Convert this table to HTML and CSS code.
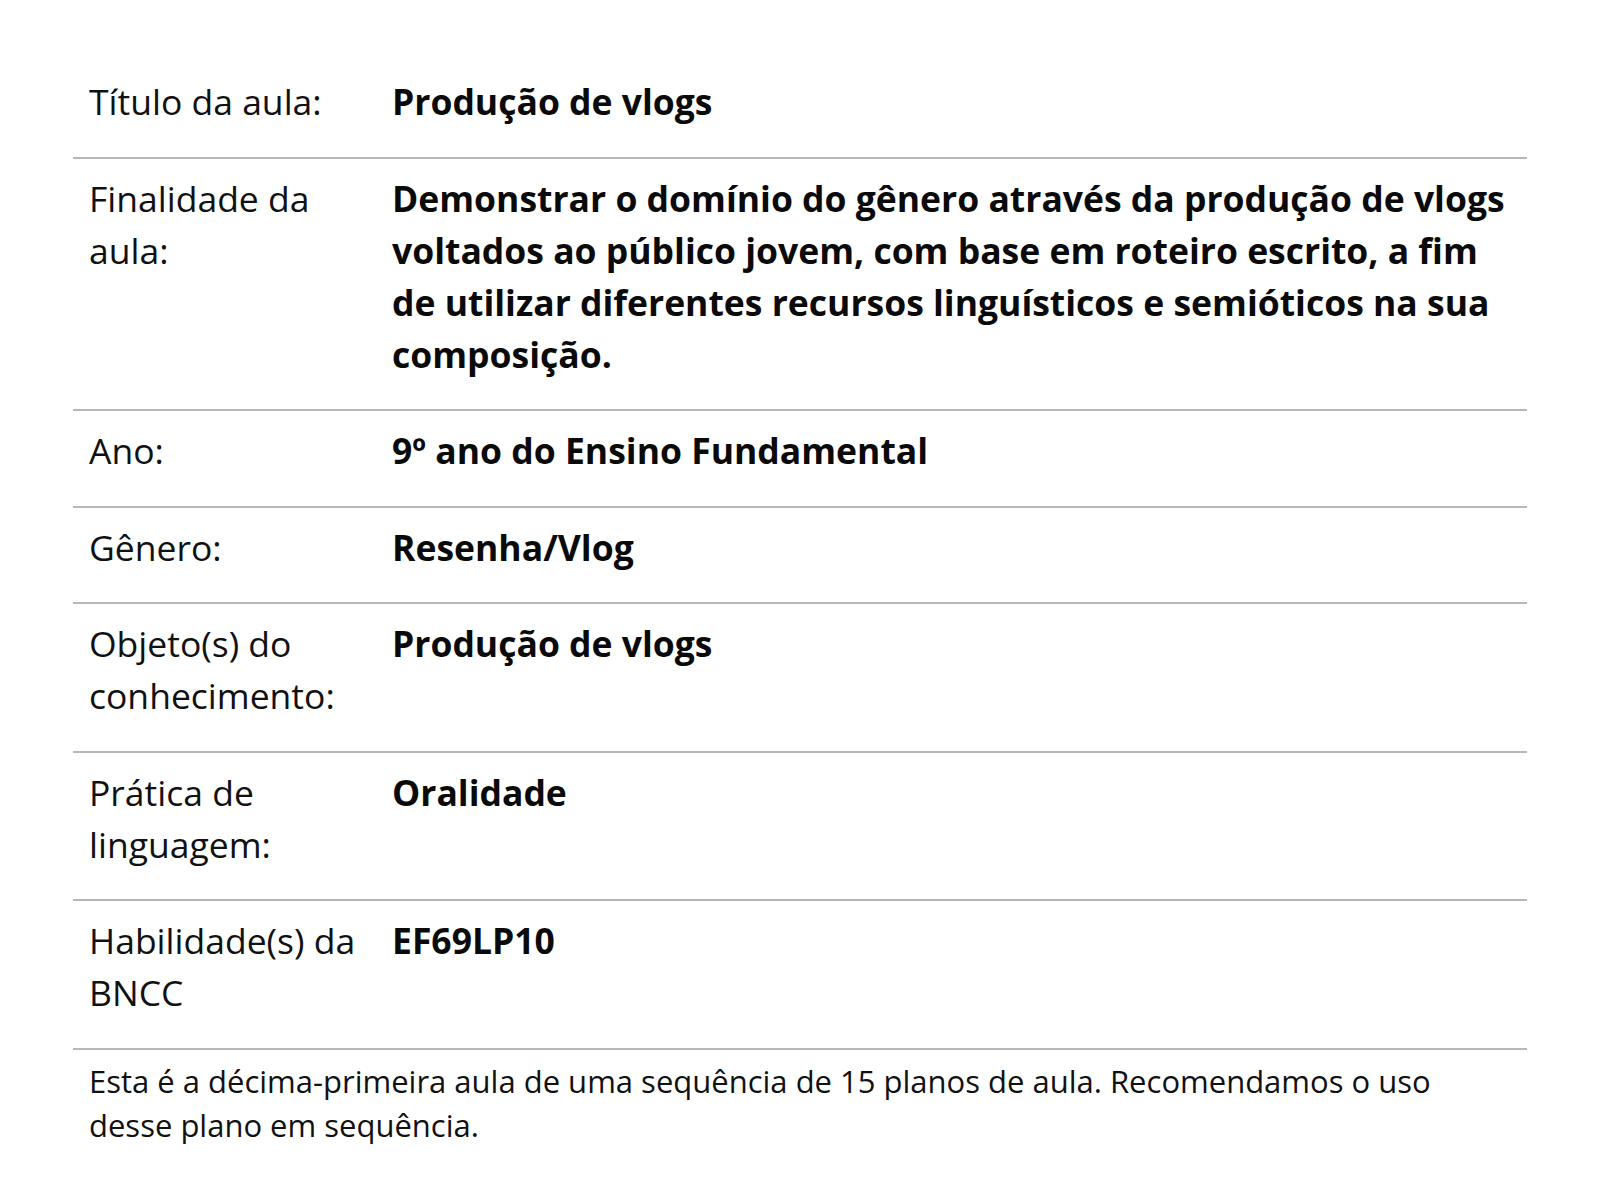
FILE: index.html
```html
<!DOCTYPE html>
<html lang="pt">
<head>
<meta charset="utf-8">
<title>Plano de aula</title>
<link rel="stylesheet" href="styles.css">
</head>
<body>
<main class="page">
  <div class="info-table">
    <div class="row">
      <div class="label">Título da aula:</div>
      <div class="value">Produção de vlogs</div>
    </div>
    <div class="row">
      <div class="label">Finalidade da aula:</div>
      <div class="value">Demonstrar o domínio do gênero através da produção de vlogs voltados ao público jovem, com base em roteiro escrito, a fim de utilizar diferentes recursos linguísticos e semióticos na sua composição.</div>
    </div>
    <div class="row">
      <div class="label">Ano:</div>
      <div class="value">9º ano do Ensino Fundamental</div>
    </div>
    <div class="row">
      <div class="label">Gênero:</div>
      <div class="value">Resenha/Vlog</div>
    </div>
    <div class="row">
      <div class="label">Objeto(s) do conhecimento:</div>
      <div class="value">Produção de vlogs</div>
    </div>
    <div class="row">
      <div class="label">Prática de linguagem:</div>
      <div class="value">Oralidade</div>
    </div>
    <div class="row">
      <div class="label">Habilidade(s) da BNCC</div>
      <div class="value">EF69LP10</div>
    </div>
  </div>
  <p class="note">Esta é a décima-primeira aula de uma sequência de 15 planos de aula. Recomendamos o uso desse plano em sequência.</p>
</main>
</body>
</html>
```

FILE: styles.css
```css
html, body {
  margin: 0;
  padding: 0;
  background: #ffffff;
}

body {
  font-family: "Open Sans", "Noto Sans", sans-serif;
  color: #111111;
}

.page {
  padding: 62px 73px 40px;
}

.info-table {
  display: flex;
  flex-direction: column;
}

.row {
  display: grid;
  grid-template-columns: 303px 1fr;
  border-bottom: 2px solid #b8b8b8;
}

.label,
.value {
  padding: 13px 16px 29.5px;
  font-size: 35.5px;
  line-height: 52px;
}

.label {
  font-weight: 400;
}

.value {
  font-weight: 700;
  color: #0a0a0a;
}

.note {
  margin: 0;
  padding: 9px 16px 0;
  font-size: 31px;
  line-height: 44px;
  font-weight: 400;
}
```
